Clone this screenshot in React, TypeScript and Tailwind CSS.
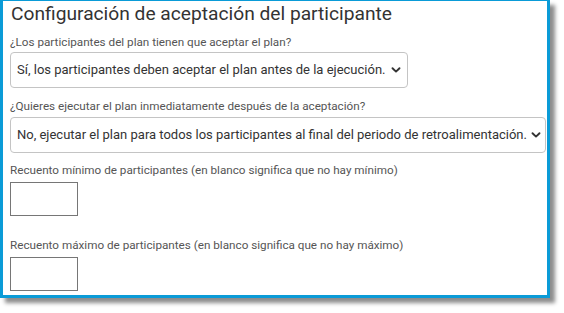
import { ReactNode } from "react";

function Chevron() {
  return (
    <svg className="w-[10px] h-[10px] shrink-0" viewBox="0 0 10 10" fill="none">
      <path d="M1.5 3.2 5 6.6 8.5 3.2" stroke="#333" strokeWidth="1.9" strokeLinecap="round" strokeLinejoin="round" />
    </svg>
  );
}

function Select({ children, className }: { children: ReactNode; className: string }) {
  return (
    <div
      className={`flex items-center justify-between gap-[4px] h-[36px] pl-[6px] pr-[6px] rounded-[4px] border border-[#c4c4c4] bg-white text-[13px] text-[#333] whitespace-nowrap ${className}`}
    >
      <span>{children}</span>
      <Chevron />
    </div>
  );
}

export default function App() {
  return (
    <div className="w-[564px] h-[313px] bg-white overflow-hidden" style={{ fontFamily: "Roboto, 'Liberation Sans', sans-serif" }}>
      <div className="w-[550px] h-[298px] border-x-[3px] border-b-[3px] border-t border-[#0a9bd7] bg-white shadow-[5px_5px_4px_rgba(0,0,0,0.45)] pl-[7px] flex flex-col items-start">
        <h1 className="mt-[1px] text-[19.2px] leading-[24px] text-[#333] pl-[1px]">
          Configuración de aceptación del participante
        </h1>
        <label className="mt-[9px] text-[11.7px] leading-[15px] text-[#555]">
          ¿Los participantes del plan tienen que aceptar el plan?
        </label>
        <Select className="mt-[2px] w-[398px]">
          Sí, los participantes deben aceptar el plan antes de la ejecución.
        </Select>
        <label className="mt-[11px] text-[11.7px] leading-[15px] text-[#555]">
          ¿Quieres ejecutar el plan inmediatamente después de la aceptación?
        </label>
        <Select className="mt-[3px] w-[536px]">
          No, ejecutar el plan para todos los participantes al final del periodo de retroalimentación.
        </Select>
        <label className="mt-[10px] text-[11.7px] leading-[15px] text-[#555]">
          Recuento mínimo de participantes (en blanco significa que no hay mínimo)
        </label>
        <div className="mt-[4px] w-[68px] h-[34px] border border-[#767676] bg-white" />
        <label className="mt-[22px] text-[11.7px] leading-[15px] text-[#555]">
          Recuento máximo de participantes (en blanco significa que no hay máximo)
        </label>
        <div className="mt-[4px] w-[68px] h-[34px] border border-[#767676] bg-white" />
      </div>
    </div>
  );
}
